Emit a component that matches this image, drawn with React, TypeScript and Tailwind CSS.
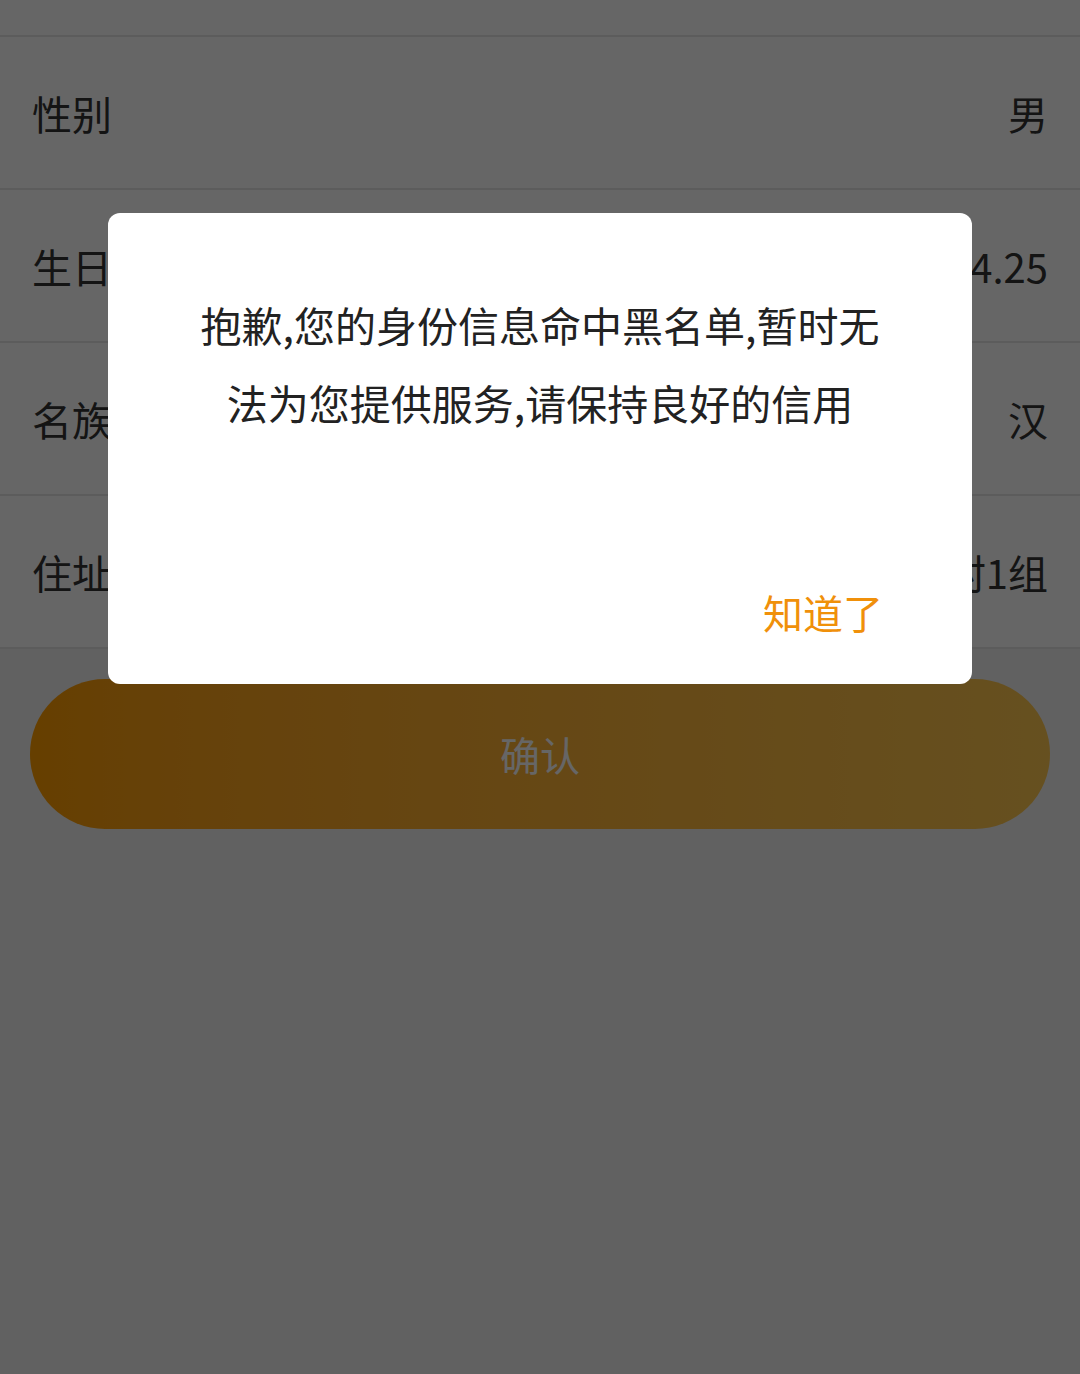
import { useState } from 'react'

const FONT = '"Noto Sans CJK SC", "Noto Sans", Roboto, sans-serif'

const ROWS = [
  { label: '性别', value: '男' },
  { label: '生日', value: '1992.04.25' },
  { label: '名族', value: '汉' },
  { label: '住址', value: '黄冈市新华村1组' },
]

export default function App() {
  const [open, setOpen] = useState(true)

  return (
    <div className="relative min-h-[1374px] w-full overflow-hidden bg-[#f2f2f2]" style={{ fontFamily: FONT }}>
      <div className="h-[37px] border-b-2 border-[#e6e6e6] bg-white" />
      {ROWS.map((r) => (
        <div
          key={r.label}
          className="flex h-[153px] items-center justify-between border-b-2 border-[#e6e6e6] bg-white px-[32px] text-[40px] text-[#333]"
        >
          <span>{r.label}</span>
          <span>{r.value}</span>
        </div>
      ))}

      <div className="px-[30px] pt-[30px]">
        <button
          type="button"
          className="flex h-[150px] w-full items-center justify-center rounded-full bg-gradient-to-r from-[#ff9e00] to-[#ffc850] text-[40px] text-white"
        >
          确认
        </button>
      </div>

      {open && (
        <div className="absolute inset-0 bg-black/60">
          <div className="absolute left-[108px] top-[213px] flex h-[471px] w-[864px] flex-col rounded-[12px] bg-white">
            <p className="px-[78px] pt-[72px] text-center text-[41px] leading-[78px] text-[#222]">
              抱歉,您的身份信息命中黑名单,暂时无法为您提供服务,请保持良好的信用
            </p>
            <div className="mt-auto flex justify-end pb-[44px] pr-[89px]">
              <button
                type="button"
                onClick={() => setOpen(false)}
                className="text-[40px] leading-[56px] text-[#f0900a]"
              >
                知道了
              </button>
            </div>
          </div>
        </div>
      )}
    </div>
  )
}
